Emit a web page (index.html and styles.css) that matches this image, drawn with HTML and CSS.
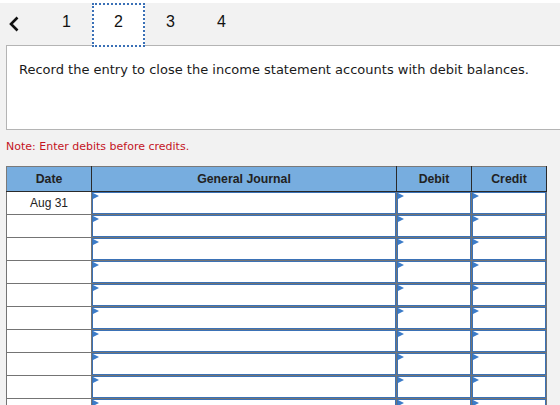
FILE: index.html
```html
<!DOCTYPE html>
<html lang="en">
<head>
<meta charset="utf-8">
<title>Journal entry</title>
<link rel="stylesheet" href="styles.css">
</head>
<body>
<div class="app">
  <nav class="tabs">
    <span class="back" aria-label="Previous">
      <svg width="20" height="42" viewBox="0 0 20 42"><polyline points="17.5,14.5 11,21 17.5,27.5" fill="none" stroke="#111" stroke-width="2.6"/></svg>
    </span>
    <span class="tab">1</span>
    <span class="tab active">2</span>
    <span class="tab">3</span>
    <span class="tab">4</span>
  </nav>
  <section class="question">
    <p>Record the entry to close the income statement accounts with debit balances.</p>
  </section>
  <p class="note">Note: Enter debits before credits.</p>
  <table class="journal">
    <colgroup>
      <col class="c-date"><col class="c-gj"><col class="c-amt"><col class="c-amt">
    </colgroup>
    <thead>
      <tr><th>Date</th><th>General Journal</th><th>Debit</th><th>Credit</th></tr>
    </thead>
    <tbody>
      <tr><td class="date">Aug 31</td><td><div class="field"></div></td><td><div class="field"></div></td><td><div class="field"></div></td></tr>
      <tr><td class="date"></td><td><div class="field"></div></td><td><div class="field"></div></td><td><div class="field"></div></td></tr>
      <tr><td class="date"></td><td><div class="field"></div></td><td><div class="field"></div></td><td><div class="field"></div></td></tr>
      <tr><td class="date"></td><td><div class="field"></div></td><td><div class="field"></div></td><td><div class="field"></div></td></tr>
      <tr><td class="date"></td><td><div class="field"></div></td><td><div class="field"></div></td><td><div class="field"></div></td></tr>
      <tr><td class="date"></td><td><div class="field"></div></td><td><div class="field"></div></td><td><div class="field"></div></td></tr>
      <tr><td class="date"></td><td><div class="field"></div></td><td><div class="field"></div></td><td><div class="field"></div></td></tr>
      <tr><td class="date"></td><td><div class="field"></div></td><td><div class="field"></div></td><td><div class="field"></div></td></tr>
      <tr><td class="date"></td><td><div class="field"></div></td><td><div class="field"></div></td><td><div class="field"></div></td></tr>
      <tr><td class="date"></td><td><div class="field"></div></td><td><div class="field"></div></td><td><div class="field"></div></td></tr>
    </tbody>
  </table>
</div>
</body>
</html>
```

FILE: styles.css
```css
html, body {
  margin: 0;
  padding: 0;
  background: #ffffff;
}

body {
  font-family: "Liberation Sans", Arial, sans-serif;
  color: #222;
  overflow: hidden;
}

.app {
  margin-top: 3px;
  background: #f2f2f2;
  min-height: 402px;
}

.tabs {
  display: flex;
  align-items: stretch;
  height: 42px;
  padding-left: 0;
}

.back {
  display: flex;
  align-items: center;
  width: 41px;
}

.back svg {
  display: block;
}

.tab {
  display: flex;
  align-items: center;
  justify-content: center;
  width: 51px;
  padding-bottom: 4px;
  font-size: 16px;
  color: #111;
  box-sizing: border-box;
}

.tab.active {
  position: relative;
  z-index: 2;
  width: 53px;
  height: 44px;
  padding-bottom: 6px;
  background: #fff;
  border: 2px dotted #3a70b6;
}

.question {
  position: relative;
  z-index: 1;
  margin-left: 6px;
  height: 85px;
  box-sizing: border-box;
  background: #fff;
  border: 1px solid #b4b4b4;
  border-right: none;
  font-family: "DejaVu Sans", Verdana, sans-serif;
  font-size: 13px;
  color: #1a1a1a;
}

.question p {
  margin: 0;
  padding: 16px 0 0 12px;
  line-height: 16px;
}

.note {
  margin: 0;
  padding: 10px 0 0 6px;
  height: 28px;
  box-sizing: border-box;
  font-family: "DejaVu Sans", Verdana, sans-serif;
  font-size: 11px;
  line-height: 14px;
  color: #c4141f;
}

.journal {
  margin: 8px 0 0 6px;
  width: 541px;
  border-collapse: collapse;
  table-layout: fixed;
}

.c-date { width: 85px; }
.c-gj { width: 305px; }
.c-amt { width: 75px; }

.journal th {
  height: 24px;
  padding: 0;
  background: #77addf;
  font-size: 12.3px;
  font-weight: bold;
  color: #222;
  text-align: center;
  border: 1px solid #2a2a2a;
  border-top-color: #7a7a7a;
}

.journal th:first-child {
  border-left-color: #7a7a7a;
}

.journal td {
  height: 22px;
  padding: 0;
  background: #fff;
  border: 1px solid #747474;
  vertical-align: top;
}

.journal td.date {
  font-size: 12px;
  text-align: center;
  vertical-align: middle;
  color: #222;
}

.field {
  position: relative;
  height: 22px;
  box-sizing: border-box;
  background: #fff;
  border: 1px solid #3b72b6;
}

.field::before {
  content: "";
  position: absolute;
  left: 0;
  top: 0;
  border-left: 6px solid #3c7cc8;
  border-top: 3.5px solid transparent;
  border-bottom: 3.5px solid transparent;
}
```
